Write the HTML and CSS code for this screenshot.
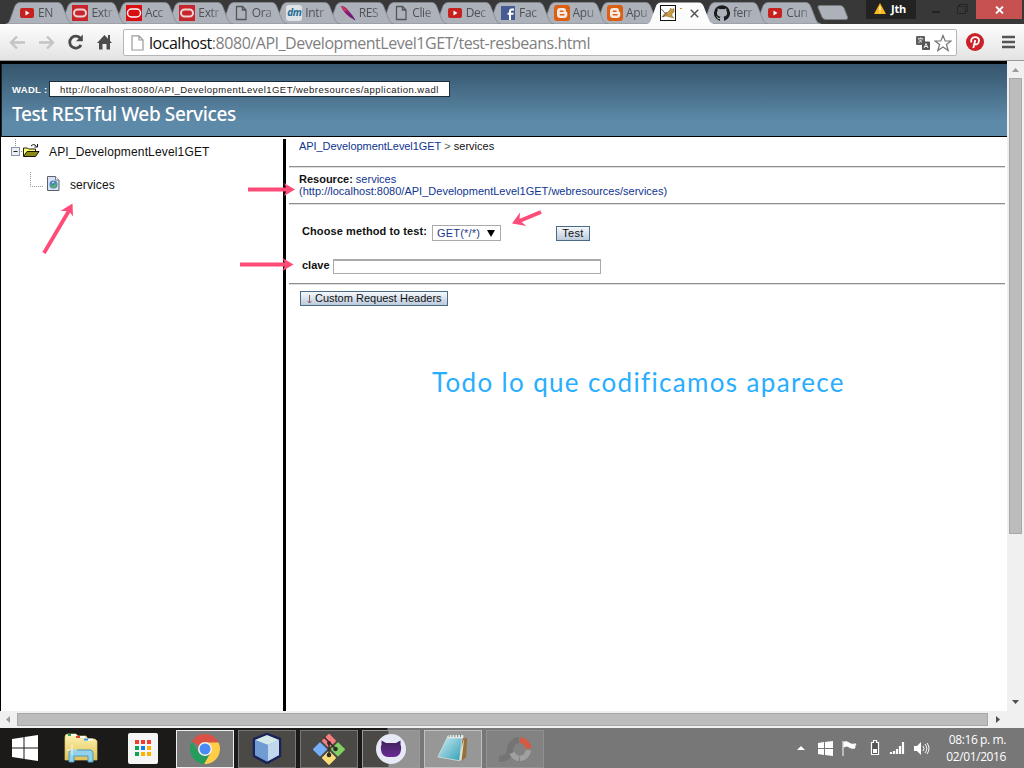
FILE: index.html
```html
<!DOCTYPE html>
<html lang="es">
<head>
<meta charset="utf-8">
<title>Test RESTful Web Services</title>
<link rel="stylesheet" href="styles.css">
</head>
<body>
<svg class="defs" width="0" height="0">
  <defs>
    <linearGradient id="note" x1="0" y1="0" x2="1" y2="1"><stop offset="0" stop-color="#d7f1f5"/><stop offset="1" stop-color="#2f9db5"/></linearGradient>
    <linearGradient id="folder" x1="0" y1="0" x2="0" y2="1"><stop offset="0" stop-color="#fdf3b4"/><stop offset="1" stop-color="#e2c355"/></linearGradient>
    <linearGradient id="cat" x1="0" y1="0" x2="0" y2="1"><stop offset="0" stop-color="#3d2157"/><stop offset="1" stop-color="#6a2a96"/></linearGradient>
  </defs>
  <symbol id="shape" viewBox="0 0 67 22"><path d="M0 22C2 21.500 3 20.500 4 18L9 4Q10.500 .5 14 .5H52Q55 .5 56.500 4L62 18Q63.500 21.500 67 22Z"/></symbol>
  <symbol id="yt" viewBox="0 0 16 16"><rect x="1" y="3" width="14" height="10" rx="2" fill="#c5221f"/><path d="M6.500 5.500v5l4-2.500z" fill="#fff"/></symbol>
  <symbol id="oracle" viewBox="0 0 16 16"><rect width="16" height="16" fill="#c9252d"/><rect x="2" y="4.500" width="12" height="7" rx="3.500" fill="none" stroke="#ead3d6" stroke-width="2"/></symbol>
  <symbol id="oracle2" viewBox="0 0 16 16"><rect width="16" height="16" fill="#d90d12"/><rect x="1.500" y="4" width="13" height="8" rx="4" fill="none" stroke="#fff" stroke-width="1.500"/></symbol>
  <symbol id="page" viewBox="0 0 16 16"><path d="M3.500 1.500h6l3.500 3.500v9.500h-9.500zM9.500 1.500v3.500h3.500" fill="none" stroke="#555" stroke-width="1.300"/></symbol>
  <symbol id="blogger" viewBox="0 0 16 16"><rect width="16" height="16" rx="3" fill="#dc5f12"/><path d="M6.300 3h3Q12 3 12 5.700V6.300Q12 7 12.700 7 13.300 7 13.300 8V10Q13.300 13 10 13H6.300Q3 13 3 10V6Q3 3 6.300 3z" fill="#f6ece4"/><path d="M6.300 6.200h2.700M6.300 9.800h3.700" stroke="#dc5f12" stroke-width="1.400" stroke-linecap="round"/></symbol>
</svg>

<header class="tabstrip">
  <nav class="tabs">
    <div class="tab"><svg class="tab-bg"><use href="#shape"/></svg><svg class="fav"><use href="#yt"/></svg><span>EN</span></div>
    <div class="tab"><svg class="tab-bg"><use href="#shape"/></svg><svg class="fav"><use href="#oracle"/></svg><span>Extr</span></div>
    <div class="tab"><svg class="tab-bg"><use href="#shape"/></svg><svg class="fav"><use href="#oracle2"/></svg><span>Acc</span></div>
    <div class="tab"><svg class="tab-bg"><use href="#shape"/></svg><svg class="fav"><use href="#oracle"/></svg><span>Extr</span></div>
    <div class="tab"><svg class="tab-bg"><use href="#shape"/></svg><svg class="fav"><use href="#page"/></svg><span>Ora</span></div>
    <div class="tab"><svg class="tab-bg"><use href="#shape"/></svg><b class="fav dm">dm</b><span>Intr</span></div>
    <div class="tab"><svg class="tab-bg"><use href="#shape"/></svg><svg class="fav" viewBox="0 0 16 16"><path d="M1 1Q4 .5 8 5L13 11 15.500 15.500 9.500 12Q3 7 1 1z" fill="#8a1a7c"/><path d="M1 1Q5 2 9 8L6 7Q2 4 1 1z" fill="#e0364c"/><path d="M6 6l9 9" stroke="#42206d"/></svg><span>RES</span></div>
    <div class="tab"><svg class="tab-bg"><use href="#shape"/></svg><svg class="fav"><use href="#page"/></svg><span>Clie</span></div>
    <div class="tab"><svg class="tab-bg"><use href="#shape"/></svg><svg class="fav"><use href="#yt"/></svg><span>Dec</span></div>
    <div class="tab"><svg class="tab-bg"><use href="#shape"/></svg><svg class="fav" viewBox="0 0 16 16"><rect x="1" y="1" width="14" height="14" fill="#465a94"/><path d="M10 15V9.500M10 9.500V6.500Q10 4.500 12 4.500H14M7.500 8.800H13.500" fill="none" stroke="#fff" stroke-width="2"/></svg><span>Fac</span></div>
    <div class="tab"><svg class="tab-bg"><use href="#shape"/></svg><svg class="fav"><use href="#blogger"/></svg><span>Apu</span></div>
    <div class="tab"><svg class="tab-bg"><use href="#shape"/></svg><svg class="fav"><use href="#blogger"/></svg><span>Apu</span></div>
    <div class="tab active"><svg class="tab-bg"><use href="#shape"/></svg><svg class="fav" viewBox="0 0 16 16"><rect x=".5" y=".5" width="15" height="15" fill="#fff" stroke="#111"/><path d="M2 12Q5 7 8 7L10 5 10.500 3 12 4.500 14 3.500 14 7 12 8.500 12 11 14 13 10 12 6 11z" fill="#c89a43" stroke="#82652e" stroke-width=".5"/><path d="M1.500 4Q4 8 7 9M3 12L6 9" stroke="#666" fill="none"/></svg><i class="tick"></i><svg class="close" viewBox="0 0 9 9"><path d="M.8.800l7.400 7.400M8.200.800L.8 8.200" stroke="#555" stroke-width="1.500"/></svg></div>
    <div class="tab"><svg class="tab-bg"><use href="#shape"/></svg><svg class="fav" viewBox="0 0 16 16"><path fill="#1b1b1b" d="M8 .2a8 8 0 0 0-2.530 15.590c.4.070.55-.17.55-.38v-1.490c-2.230.48-2.700-.94-2.700-.94-.36-.92-.89-1.170-.89-1.170-.73-.5.050-.49.050-.49.8.060 1.230.83 1.230.83.72 1.220 1.870.87 2.330.66.070-.52.280-.87.510-1.070-1.780-.2-3.640-.89-3.640-3.950 0-.87.310-1.590.82-2.150-.08-.2-.36-1.020.08-2.120 0 0 .67-.21 2.200.82a7.640 7.640 0 0 1 4 0c1.530-1.040 2.200-.82 2.200-.82.440 1.100.160 1.920.080 2.120.510.560.820 1.280.820 2.150 0 3.070-1.870 3.750-3.650 3.950.290.250.540.730.540 1.480v2.190c0 .210.150.460.550.380A8 8 0 0 0 8 .2z"/></svg><span>ferr</span></div>
    <div class="tab"><svg class="tab-bg"><use href="#shape"/></svg><svg class="fav"><use href="#yt"/></svg><span>Cun</span></div>
  </nav>
  <svg class="newtab" viewBox="0 0 32 15"><path d="M3 .5H23Q26 .5 27 3L30.500 12Q31 14.500 29 14.500H9Q6 14.500 5 12L1 2.500Q.5.500 3 .5z" fill="#adb2ba" stroke="#777b80"/></svg>
  <div class="profile"><svg width="12" height="11" viewBox="0 0 12 11"><path d="M6 0L12 11H0z" fill="#fcb816"/><path d="M6 3.500V7.500M6 8.500V9.800" stroke="#fff" stroke-width="1.300"/></svg><span>Jth</span></div>
  <svg class="winbtns" width="60" height="20" viewBox="0 0 60 20"><path d="M16 12h8" stroke="#222" stroke-width="2"/><path d="M41.500 6.500h8v7h-8zM43.500 6.500v-2h8v7h-2" fill="none" stroke="#252525"/></svg>
  <div class="winclose"><svg width="9" height="8" viewBox="0 0 9 8"><path d="M1 .5l7 7M8 .5l-7 7" stroke="#fff" stroke-width="1.800"/></svg></div>
</header>

<div class="toolbar">
  <svg class="navs" width="115" height="36" viewBox="0 0 115 36">
    <path d="M25 18.500H12M17 12.500L11 18.500L17 24.500M39 18.500H52M47 12.500L53 18.500L47 24.500" fill="none" stroke="#c4c4c4" stroke-width="2.400"/>
    <path d="M80.500 14.500A6 6 0 1 0 81 21" fill="none" stroke="#494949" stroke-width="2.800"/><path d="M82.800 10.500V17.300H76z" fill="#494949"/>
    <path d="M97 19L104.500 11L112 19H110V25.500H106.500V20H102.500V25.500H99V19z" fill="#4b4b4b"/><path d="M108 11h2v6h-2z" fill="#4b4b4b"/>
  </svg>
  <div class="omnibox">
    <svg class="doc" width="13" height="16" viewBox="0 0 13 16"><path d="M1 .8h7L12 5v10H1zM8 .8V5h4" fill="#fff" stroke="#999" stroke-width="1.200"/></svg>
    <span class="url"><b>localhost</b>:8080/API_DevelopmentLevel1GET/test-resbeans.html</span>
    <svg class="translate" width="14" height="14" viewBox="0 0 14 14"><rect width="9" height="9" rx="1" fill="#606060"/><path d="M2 2.700h5M4.500 1.500v1M3 3.500L6.500 7M6 3.500L2.500 7" stroke="#fff" fill="none" stroke-width=".8"/><rect x="6" y="5.500" width="8" height="8.500" rx="1" fill="#555"/><path d="M8 12L10 7.500 12 12M8.800 10.500h2.500" stroke="#fff" fill="none" stroke-width=".9"/></svg>
    <svg class="star" width="18" height="18" viewBox="0 0 18 18"><path d="M9 1.500L11.200 7H17L12.400 10.500 14.200 16.500 9 13 3.800 16.500 5.600 10.500 1 7H6.800z" fill="#fff" stroke="#747474" stroke-width="1.200"/></svg>
  </div>
  <svg class="pin" width="18" height="18" viewBox="0 0 18 18"><circle cx="9" cy="9" r="9" fill="#cb2027"/><path d="M5.500 9.500Q4 5 8.800 4.200 13 4 13 7.500 12.500 11.500 9.800 11.500 8.500 11 8.500 10M9.300 7L7.300 15" fill="none" stroke="#fff" stroke-width="1.800"/></svg>
  <svg class="menu" width="13" height="14" viewBox="0 0 13 14"><path d="M0 2h13M0 7h13M0 12h13" stroke="#555" stroke-width="2.600"/></svg>
</div>

<div class="viewport">
  <div class="document">
    <div class="banner">
      <div class="wadl"><b>WADL :</b><span class="wadl-url">http://localhost:8080/API_DevelopmentLevel1GET/webresources/application.wadl</span></div>
      <h1>Test RESTful Web Services</h1>
    </div>
    <div class="panes">
      <aside class="tree">
        <div class="root">
          <svg width="30" height="22" viewBox="0 0 30 22"><path d="M4.500 2v7M10 14.500h3" stroke="#888" stroke-dasharray="1 1"/><rect x=".5" y="10.500" width="8" height="8" fill="#eceef6" stroke="#8795ae"/><path d="M2.500 14.500h4" stroke="#222"/><path d="M12.500 19V11h4l1 1h7v3" fill="#ffff75" stroke="#202000"/><path d="M12.500 19.500L16 14.500H28L24.500 19.500z" fill="#8b8b18" stroke="#151500"/><path d="M20 9Q23 6 25.500 9.500M26.500 7v3h-3" fill="none" stroke="#111"/></svg>
          <span>API_DevelopmentLevel1GET</span>
        </div>
        <div class="leaf">
          <svg width="33" height="22" viewBox="0 0 33 22"><path d="M1.500 0V14.500H15" fill="none" stroke="#999" stroke-dasharray="1 1"/><path d="M18.500 4.500h8l3.500 3.500v10.500h-11.500z" fill="#d7e1fa" stroke="#5d6069"/><path d="M26.500 4.500v3.500h3.500" fill="#fff" stroke="#777"/><circle cx="24.500" cy="12.500" r="4" fill="#4b83b7"/><path d="M21 12l3 2 4-4-1 5-4 1z" fill="#55b861"/><path d="M23 11l2-1" stroke="#fff"/></svg>
          <span>services</span>
        </div>
      </aside>
      <main class="detail">
        <div class="crumbs"><a>API_DevelopmentLevel1GET</a> <i>&gt;</i> services</div>
        <div class="resource"><b>Resource:</b> <a>services</a><br><a class="endpoint">(http://localhost:8080/API_DevelopmentLevel1GET/webresources/services)</a></div>
        <div class="form">
          <div class="method"><b>Choose method to test:</b><span class="select">GET(*/*)<svg width="8" height="7" viewBox="0 0 8 7"><path d="M0 0h8L4 7z"/></svg></span><span class="button test">Test</span></div>
          <div class="param"><b>clave</b><span class="field"></span></div>
        </div>
        <div class="headers"><span class="button custom"><svg width="7" height="9" viewBox="0 0 7 9"><path d="M3.500 0V8M1.500 6l2 2 2-2" fill="none" stroke="#8b5b5b"/></svg>Custom Request Headers</span></div>
        <p class="caption">Todo lo que codificamos aparece</p>
      </main>
    </div>
  </div>
  <div class="vscroll"><svg width="7" height="4" viewBox="0 0 7 4"><path d="M0 4h7L3.500 0z" fill="#9a9a9a"/></svg><div class="vthumb"></div><svg width="7" height="4" viewBox="0 0 7 4"><path d="M0 0h7L3.500 4z" fill="#505050"/></svg></div>
  <svg class="arrows" width="1007" height="650" viewBox="0 61 1007 650">
    <g fill="none" stroke="#ff4b78" stroke-width="3.800"><path d="M44 253L70 209"/><path d="M248 189.500H290"/><path d="M240 264.500H289"/><path d="M541 212L517 222"/></g>
    <g fill="#ff4b78"><path d="M72.500 203.500L73 216.500 69 211 60.500 211z"/><path d="M295 189.500L284 196 287 189.500 284 183z"/><path d="M293.500 264.500L282.500 271 285.500 264.500 282.500 258z"/><path d="M512 223.500L520 212.500 519.500 220.500 526.500 226z"/></g>
  </svg>
</div>
<div class="hscroll"><svg width="4" height="7" viewBox="0 0 4 7"><path d="M4 0v7L0 3.500z" fill="#9a9a9a"/></svg><div class="hthumb"></div><svg width="4" height="7" viewBox="0 0 4 7"><path d="M0 0v7L4 3.500z" fill="#505050"/></svg></div>

<footer class="taskbar">
  <div class="launch"><svg width="28" height="26" viewBox="0 0 28 26"><path d="M1 4L12.500 2.200V12.500H1zM13.500 2L27 0V12.500H13.500zM1 13.500H12.500V23.800L1 22zM13.500 13.500H27V26L13.500 24z" fill="#fff"/></svg></div>
  <div class="launch files"><svg width="34" height="30" viewBox="0 0 34 30"><path d="M1 27V4Q1 1 4 1H12L14 3H22L24 6H31L33 8V27z" fill="url(#folder)" stroke="#dfc56c" stroke-width=".7"/><path d="M4 2h8M12 4h9M20 6.500h9" stroke="#fff" stroke-width="2"/><path d="M4 2h3" stroke="#20aa45" stroke-width="2"/><path d="M12 4h4" stroke="#db4630" stroke-width="2"/><path d="M20 6.500h4" stroke="#2d9be3" stroke-width="2"/><path d="M5 29V20Q5 17 8 17H26Q29 17 29 20V29H24V23H10V29z" fill="#94d2eb" stroke="#4a9abf"/><path d="M8 12v10M3 17h10" stroke="#fff" stroke-width=".8"/></svg></div>
  <div class="launch apps"><svg width="30" height="31" viewBox="0 0 30 31"><rect width="30" height="31" rx="2" fill="#f5f5f5"/><path d="M7 7h4v4H7zM13 7h4v4h-4zM19 7h4v4h-4z" fill="#f33b30"/><path d="M7 13h4v4H7zM7 19h4v4H7z" fill="#0ba45c"/><path d="M13 13h4v4h-4z" fill="#1180ed"/><path d="M13 19h4v4h-4zM19 13h4v4h-4zM19 19h4v4h-4z" fill="#fbb300"/></svg></div>
  <div class="task current"><svg width="30" height="30" viewBox="0 0 30 30"><path d="M15 15L2 7.500A15 15 0 0 1 28.500 8.500H15z" fill="#dd5144"/><path d="M15 8.500H28.500A15 15 0 0 1 14 30L21 18z" fill="#ffcd46"/><path d="M2 7.500L9 19 15 22 20 19 14 30A15 15 0 0 1 2 7.500z" fill="#249c5c"/><circle cx="15" cy="15" r="7" fill="#f1f1f1"/><circle cx="15" cy="15" r="5.500" fill="#4a8af4"/></svg></div>
  <div class="task dark"><svg width="30" height="31" viewBox="0 0 30 31"><path d="M15 1L28 6V23L15 30 2 23V6z" fill="#7399c9" stroke="#1b2258" stroke-width="2.500" stroke-linejoin="round"/><path d="M15 2L27 7 16 12 3 7z" fill="#d3eae9"/><path d="M3 7L16 12V28L3 22z" fill="#719bd3"/><path d="M16 12L27 7V22L16 28z" fill="#c2d9ed"/></svg></div>
  <div class="task dark"><svg width="32" height="32" viewBox="0 0 32 32"><rect x="11" y="2.500" width="10.500" height="10.500" rx="1" transform="rotate(45 16 7.500)" fill="#f77e7e"/><rect x="2" y="11" width="10.500" height="10.500" rx="1" transform="rotate(45 7 16)" fill="#76aef7"/><rect x="20" y="11" width="10.500" height="10.500" rx="1" transform="rotate(45 25 16)" fill="#83cf63"/><rect x="11" y="19.500" width="10.500" height="10.500" rx="1" transform="rotate(45 16 24.500)" fill="#fadc78"/><path d="M11 4L16 9V22M16 9L22 15" fill="none" stroke="#302b2a" stroke-width="1.500"/><g fill="#302b2a"><circle cx="16" cy="10" r="2"/><circle cx="22.500" cy="16" r="2.300"/><circle cx="16" cy="22" r="2.300"/></g></svg></div>
  <div class="task split"><svg width="30" height="30" viewBox="0 0 30 30"><circle cx="15" cy="15" r="15" fill="#e8e9f7"/><path d="M5.500 6.500L10 9H20L24.500 6.500V11Q25.500 12 25 16 24 23 18 23H12Q6 23 5 16 4.500 12 5.500 11z" fill="url(#cat)"/></svg></div>
  <div class="task light"><svg width="32" height="31" viewBox="0 0 34 32"><path d="M27 4L32 5 31 25 25 30z" fill="#94703b"/><path d="M29 5l-3 24-4-1z" fill="#e7e1c7"/><path d="M12 2H27L24 29 1 25z" fill="url(#note)" stroke="#d2e4e6" stroke-width=".8"/><path d="M12 2H28V5H11z" fill="#e9efed"/><path d="M13 1v3M16 1v3M19 1v3M22 1v3M25 1v3" stroke="#737c79"/></svg></div>
  <div class="task pale"><svg width="34" height="28" viewBox="0 0 34 28"><path d="M21 5A9.500 9.500 0 0 0 12 14Q12 24 1 24" fill="none" stroke="#747474" stroke-width="6"/><path d="M22 5A9.500 9.500 0 0 1 30.500 13.500" fill="none" stroke="#d55a43" stroke-width="6"/><path d="M30.500 15A9.500 9.500 0 0 1 22 23.500M21 23.500A9.500 9.500 0 0 1 14 18" fill="none" stroke="#a0a0a0" stroke-width="5.500"/></svg></div>
  <svg class="tray" width="140" height="20" viewBox="0 0 140 20">
    <path d="M0 12L4 8 8 12z" fill="#fff"/>
    <path d="M21 5L27 4V10H21zM28 4L36 3V10H28zM21 11H27V17L21 16zM28 11H36V18L28 17z" fill="#fff"/>
    <path d="M46 3V18M47 4Q50 3 52 5T59 6Q57 8 58 10Q54 11 52 9T47 9z" fill="#fff" stroke="#fff"/>
    <path d="M75.500 4.500h1v-2h3v2h2v12h-7v-12z" fill="#555" stroke="#fff" stroke-width="1.200"/><path d="M76 11h4v4h-4z" fill="#fff"/>
    <path d="M94 16v-2M97 16v-3M100 16v-5M103 16V8M106 16V4" stroke="#fff" stroke-width="2.200"/>
    <path d="M117 8h3l4-4v13l-4-4h-3z" fill="#fff"/><path d="M126 8q2 2.500 0 5M128 6q3.500 4.500 0 9M130 5q4 5.500 0 11" fill="none" stroke="#fff"/>
  </svg>
  <div class="clock"><span class="time">08:16 p. m.</span><span class="date">02/01/2016</span></div>
</footer>
</body>
</html>
```
FILE: styles.css
```css
* { box-sizing: border-box; }
body { margin: 0; width: 1024px; height: 768px; overflow: hidden; display: flex; flex-direction: column; font-family: "Liberation Sans", Arial, sans-serif; background: #fff; }
svg { flex: none; display: block; }
.defs { position: absolute; }

.tabstrip { height: 24px; flex: none; background: #383838; display: flex; align-items: flex-start; }
.tabs { display: flex; width: 818px; padding-left: 6px; height: 24px; }
.tab { position: relative; width: 67px; height: 24px; margin-right: -13.550px; flex: none; display: flex; padding: 5px 0 0 13px; font: 12px/16px "Open Sans", "Noto Sans", sans-serif; letter-spacing: -.35px; color: #4e5156; }
.tab-bg { position: absolute; left: 0; top: 2px; width: 67px; height: 22px; fill: #adb2ba; stroke: #858a91; stroke-width: .8; z-index: -1; }
.fav { width: 16px; height: 16px; flex: none; }
.tab span { margin-left: 3px; width: 24px; white-space: nowrap; -webkit-mask-image: linear-gradient(90deg, #000 50%, rgba(0,0,0,.25)); mask-image: linear-gradient(90deg, #000 50%, rgba(0,0,0,.25)); }
.tab { z-index: 1; }
.tab:nth-child(1) { z-index: 15; }
.tab:nth-child(2) { z-index: 14; }
.tab:nth-child(3) { z-index: 13; }
.tab:nth-child(4) { z-index: 12; }
.tab:nth-child(5) { z-index: 11; }
.tab:nth-child(6) { z-index: 10; }
.tab:nth-child(7) { z-index: 9; }
.tab:nth-child(8) { z-index: 8; }
.tab:nth-child(9) { z-index: 7; }
.tab:nth-child(10) { z-index: 6; }
.tab:nth-child(11) { z-index: 5; }
.tab:nth-child(12) { z-index: 4; }
.tab:nth-child(14) { z-index: 2; }
.tab.active { z-index: 20; }
.active .tab-bg { fill: #fcfcfc; stroke: none; }
.tick { width: 2px; height: 1px; background: #c58b2b; margin: 3px 0 0 4px; }
.close { width: 9px; height: 9px; margin: 4px 0 0 8px; }
.dm { background: #dfe3e6; border-radius: 3px; color: #1e6b96; font: italic bold 10px/14px "Open Sans", sans-serif; letter-spacing: -.5px; text-align: center; }
.newtab { width: 32px; height: 15px; margin: 5px 16px 0 -1px; }
.profile { width: 50px; height: 19px; background: #222; margin-left: 1px; display: flex; align-items: center; gap: 5px; padding-left: 8px; padding-bottom: 2px; color: #fff; font: bold 11px "Open Sans", sans-serif; letter-spacing: -.2px; }
.winbtns { width: 60px; }
.winclose { width: 46px; height: 19px; flex: none; background: #c75050; display: flex; align-items: center; justify-content: center; }

.toolbar { height: 37px; flex: none; display: flex; align-items: flex-start; background: linear-gradient(#fdfdfd, #e3e3e3); border-bottom: 1px solid #999; }
.omnibox { width: 834px; height: 27px; margin: 5px 0 0 8px; border: 1px solid #b5b5b5; border-radius: 2px; background: #fff; display: flex; align-items: center; padding: 0 4px 0 7px; }
.url { flex: 1; margin-left: 5px; font: 16px/24px "Open Sans", "Noto Sans", sans-serif; letter-spacing: -.464px; color: #808080; white-space: nowrap; }
.url b { font-weight: 400; color: #111; }
.star { margin-left: 4px; }
.pin { margin: 9px 0 0 9px; }
.menu { margin: 11px 0 0 18px; }

.viewport { position: relative; height: 650px; flex: none; display: flex; }
.document { width: 1007px; border-left: 1px solid #000; border-top: 3px solid #000; display: flex; flex-direction: column; }
.banner { height: 73px; flex: none; padding: 16px 0 0 10px; border-bottom: 1px solid #000; border-left: 1px solid #16222c; background: linear-gradient(#35556c, #5d8aa9 80%); color: #fff; }
.wadl { display: flex; height: 18px; align-items: center; }
.wadl b { width: 37px; white-space: nowrap; font-size: 9.500px; letter-spacing: .3px; }
.wadl-url { width: 401px; height: 16px; border: 1px solid #1c2c38; background: #fff; color: #222; padding-left: 10px; font-size: 9.500px; line-height: 15px; letter-spacing: .46px; white-space: nowrap; }
h1 { margin: 3px 0 0; font: 500 19px/26px "Noto Sans", "Open Sans", sans-serif; letter-spacing: -.38px; white-space: nowrap; }
.panes { display: flex; flex: 1; }
.tree { width: 285px; border-right: 3px solid #000; margin-top: 2px; font-size: 12px; color: #111; }
.root { display: flex; align-items: center; height: 22px; padding-left: 10px; margin-top: -2px; letter-spacing: .16px; }
.root span { margin: 7px 0 0 8px; }
.leaf { display: flex; align-items: center; height: 22px; margin-top: 13px; padding-left: 28px; letter-spacing: .1px; }
.leaf span { margin: 4px 0 0 8px; }
.detail { flex: 1; padding: 0 2px 0 3px; font-size: 11px; line-height: 12px; color: #111; }
.detail a { color: #0f3590; }
.crumbs, .resource, .form { border-bottom: 1px solid #8f8f8f; box-shadow: 0 1px #dcdcdc; }
.crumbs { height: 30px; padding: 3px 0 0 10px; white-space: pre; }
.crumbs a { letter-spacing: -.06px; }
.crumbs i { font-style: normal; color: #555; }
.resource { height: 37px; padding: 6px 0 0 10px; }
.endpoint { letter-spacing: .01px; }
.form { height: 80px; padding: 20px 0 0 13px; }
.method { display: flex; align-items: flex-start; height: 35px; padding-top: 1px; }
.select { width: 69px; height: 16px; margin-left: 5px; border: 1px solid #aaa; color: #1b3a8c; padding: 0 5px 0 4px; display: flex; justify-content: space-between; line-height: 14px; letter-spacing: .2px; }
.method b { width: 125px; white-space: nowrap; letter-spacing: .1px; }
.select svg { margin-top: 4px; fill: #000; }
.button { border: 1px solid #4b6a86; background: linear-gradient(#f5f8fc, #bccadb); color: #111; text-align: center; white-space: nowrap; }
.test { margin: 1px 0 0 55px; width: 34px; height: 15px; line-height: 13px; letter-spacing: .3px; }
.param { display: flex; }
.param b { width: 31px; }
.field { width: 268px; height: 15px; border: 1px solid #aaa; border-top: 2px solid #aaa; }
.headers { padding: 7px 0 0 11px; display: flex; }
.custom { display: flex; width: 148px; height: 15px; padding-left: 5px; gap: 2px; line-height: 13px; }
.custom svg { margin-top: 3px; }
.caption { margin: 56px 0 0 143px; font: 26px/40px Lato, sans-serif; letter-spacing: 1.340px; color: #29aeff; white-space: nowrap; }
.vscroll { width: 17px; background: #f0f0f0; display: flex; flex-direction: column; align-items: center; padding: 7px 0; }
.vthumb { width: 13px; height: 456px; margin: 6px 0 auto; background: #bcbcbc; border: 1px solid #a8a8a8; }
.arrows { position: absolute; left: 0; top: 0; }
.hscroll { height: 17px; flex: none; background: #f0f0f0; display: flex; align-items: center; padding: 0 24px 0 6px; }
.hthumb { width: 971px; height: 13px; margin: 0 auto 0 7px; background: #bcbcbc; border: 1px solid #a8a8a8; }

.taskbar { height: 40px; flex: none; display: flex; align-items: center; padding-left: 11px; background: linear-gradient(90deg, #1b1a18 0 387px, #777 388px); }
.launch { width: 53px; }
.files { width: 64px; }
.apps { width: 48px; }
.task { width: 58px; height: 38px; margin: 1px 4px 0 0; border: 1px solid #999; display: flex; align-items: center; justify-content: center; flex: none; }
.current { background: #7b7b7b; border-color: #eee; }
.dark { background: #4a4946; border-color: #777; }
.split { background: linear-gradient(90deg, #4a4946 0 25px, #939393 26px); }
.light { background: #979797; border-color: #c0c0c0; }
.pale { background: #828282; border-color: #919191; margin-right: 0; }
.tray { margin-left: 253px; }
.clock { width: 59px; margin-left: 10px; display: flex; flex-direction: column; align-items: flex-end; color: #fff; font: 12px/17px "Open Sans", sans-serif; letter-spacing: -.4px; white-space: nowrap; }
```
